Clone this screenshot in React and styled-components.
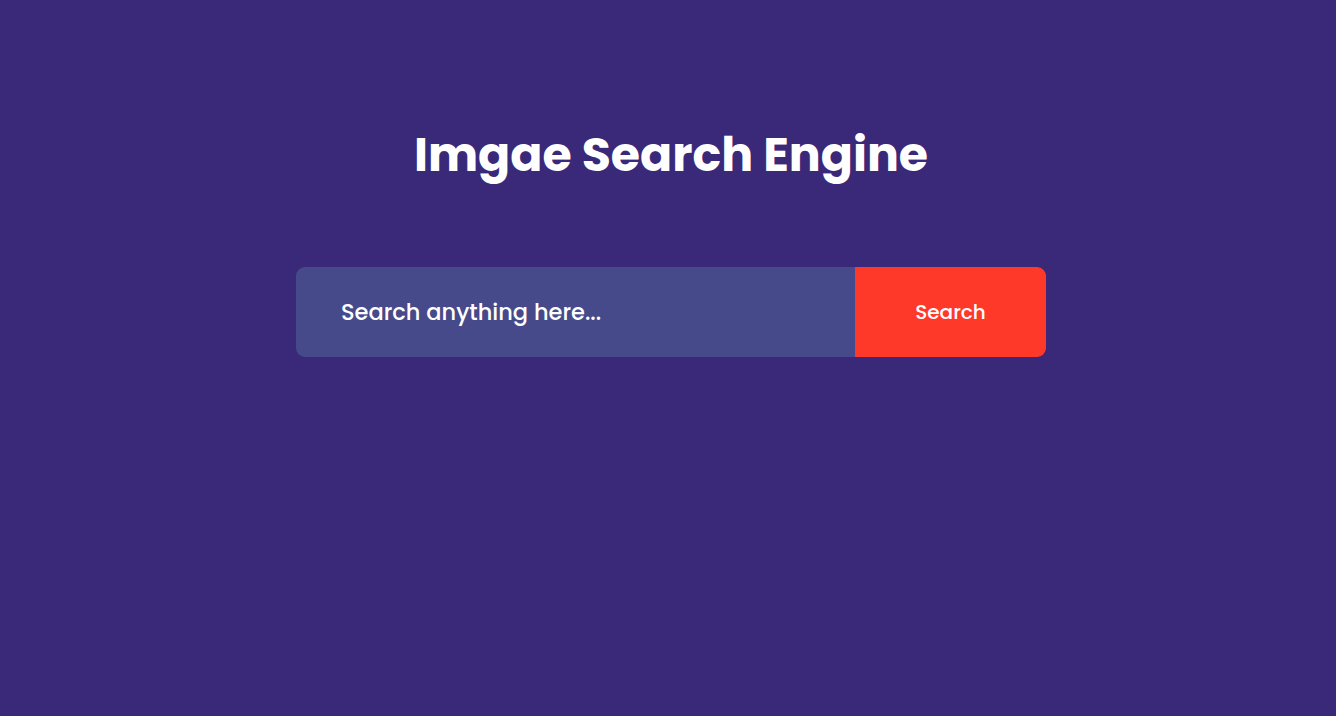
import React from "react";
import styled, { createGlobalStyle } from "styled-components";

const Global = createGlobalStyle`
  html, body { margin: 0; padding: 0; background: #3a2879; }
  body { font-family: "Poppins", "Inter", "Open Sans", sans-serif; }
  * { box-sizing: border-box; }
`;

const Page = styled.main`
  min-height: 716px;
  display: flex;
  flex-direction: column;
  align-items: center;
  padding-top: 126px;
  padding-left: 6px;
`;

const Title = styled.h1`
  margin: 0;
  font-size: 47.4px;
  line-height: 58px;
  font-weight: 700;
  color: #ffffff;
`;

const SearchForm = styled.form`
  margin-top: 83px;
  width: 750px;
  height: 90px;
  display: flex;
  border-radius: 9px;
  overflow: hidden;
`;

const SearchInput = styled.input`
  flex: 1;
  min-width: 0;
  border: none;
  outline: none;
  background: #464a8a;
  color: #ffffff;
  padding: 0 0 0 45px;
  font-family: inherit;
  font-size: 22.5px;
  font-weight: 500;
  &::placeholder { color: #ffffff; opacity: 1; }
`;

const SearchButton = styled.button`
  width: 191px;
  border: none;
  background: #ff392a;
  color: #ffffff;
  font-family: inherit;
  font-size: 20px;
  font-weight: 500;
  cursor: pointer;
`;

export default function App() {
  return (
    <>
      <Global />
      <Page>
        <Title>Imgae Search Engine</Title>
        <SearchForm onSubmit={(e) => e.preventDefault()}>
          <SearchInput type="text" placeholder="Search anything here..." />
          <SearchButton type="submit">Search</SearchButton>
        </SearchForm>
      </Page>
    </>
  );
}
